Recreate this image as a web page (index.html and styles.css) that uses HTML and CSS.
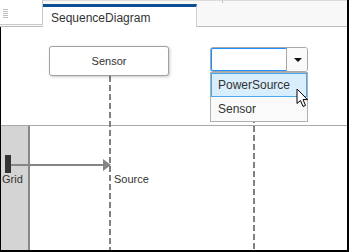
FILE: index.html
```html
<!DOCTYPE html>
<html>
<head>
<meta charset="utf-8">
<link rel="stylesheet" href="styles.css">
</head>
<body>
<div class="app">
  <div class="toolbar">
    <div class="grip"><span></span><span></span><span></span><span></span><span></span></div>
    <div class="tab">SequenceDiagram</div>
    <div class="tick"></div>
  </div>
  <div class="canvas">
    <div class="upper"></div>
    <div class="lower">
      <div class="lane"></div>
    </div>

    <div class="lifeline l1"></div>
    <div class="lifeline l2"></div>

    <div class="node sensor">Sensor</div>

    <div class="combo">
      <div class="combo-input"></div>
      <div class="combo-btn"><span class="caret"></span></div>
    </div>

    <ul class="list">
      <li class="item active">PowerSource</li>
      <li class="item">Sensor</li>
    </ul>

    <div class="actbar"></div>
    <div class="msg"><div class="msg-line"></div><div class="msg-head"></div></div>
    <div class="label grid">Grid</div>
    <div class="label source">Source</div>

    <svg class="cursor" width="13" height="20" viewBox="0 0 13 20">
      <path d="M1 1 L1 15.5 L4.5 12.5 L7 18.5 L9.5 17.4 L7 11.6 L11.5 11.6 Z" fill="#fff" stroke="#000" stroke-width="1" stroke-linejoin="miter"/>
    </svg>
  </div>
</div>
</body>
</html>
```

FILE: styles.css
```css
* { box-sizing: border-box; }
html, body { margin: 0; padding: 0; background: #fff; }
body { font-family: "Liberation Sans", Arial, sans-serif; color: #333; }

.app {
  width: 349px;
  height: 252px;
  display: flex;
  flex-direction: column;
  border-right: 2px solid #000;
}

.toolbar {
  height: 27px;
  flex: none;
  display: flex;
  align-items: flex-start;
  background: #f8f8f8;
  border-top: 1px solid #dcdcdc;
  border-bottom: 1px solid #bdbdbd;
  position: relative;
}

.grip {
  width: 43px;
  height: 25px;
  margin-top: -1px;
  background: #fff;
  border-right: 1px solid #c8c8c8;
  border-bottom: 1px solid #c8c8c8;
  display: flex;
  flex-direction: column;
  gap: 1px;
  padding: 9px 0 0 3px;
}
.grip span {
  display: block;
  width: 5px;
  height: 1px;
  background: #bdbdbd;
}

.tab {
  width: 154px;
  height: 23px;
  margin-top: 3px;
  margin-bottom: -1px;
  background: #fff;
  border-top: 3px solid #0b4f96;
  border-right: 1px solid #d0d0d0;
  padding: 4px 0 0 8px;
  font-size: 12px;
  line-height: 14px;
  color: #333;
  white-space: nowrap;
}

.tick {
  position: absolute;
  left: 222px;
  top: 0;
  width: 1px;
  height: 2px;
  background: #bbb;
}

.canvas {
  flex: 1;
  position: relative;
  display: flex;
  flex-direction: column;
  border-left: 1px solid #000;
  border-bottom: 2px solid #000;
  background: #fff;
  overflow: hidden;
}

.upper { height: 98px; flex: none; }
.lower {
  flex: 1;
  border-top: 1px solid #a8a8a8;
  display: flex;
}
.lane {
  width: 29px;
  background: #d4d4d4;
  border-right: 2px solid #888;
}

.lifeline {
  position: absolute;
  width: 2px;
  bottom: 0;
  background: repeating-linear-gradient(to bottom, #808080 0 6px, transparent 6px 9px);
}
.l1 { left: 108px; top: 49px; }
.l2 { left: 252px; top: 45px; }

.node {
  position: absolute;
  background: #fff;
  border: 1px solid #a0a0a0;
  border-radius: 3px;
  box-shadow: 1px 1px 3px rgba(0,0,0,0.22);
  display: flex;
  align-items: center;
  justify-content: center;
  font-size: 11px;
  color: #333;
}
.sensor { left: 48px; top: 19px; width: 120px; height: 30px; }

.combo {
  position: absolute;
  left: 209px;
  top: 20px;
  width: 98px;
  height: 25px;
  display: flex;
  background: #fff;
  border: 1px solid #a8a8a8;
  border-radius: 3px;
}
.combo-input {
  flex: 1;
  border: 1px solid #1e8fff;
  border-right: none;
  border-radius: 2px 0 0 2px;
  margin: 0 0 0 0;
}
.combo-btn {
  width: 21px;
  border-left: 1px solid #a8a8a8;
  display: flex;
  align-items: center;
  justify-content: center;
  background: #fafafa;
  border-radius: 0 2px 2px 0;
}
.caret {
  width: 0;
  height: 0;
  border-left: 4px solid transparent;
  border-right: 4px solid transparent;
  border-top: 4px solid #111;
  margin-left: 1px;
}

.list {
  position: absolute;
  left: 209px;
  top: 45px;
  width: 98px;
  height: 50px;
  margin: 0;
  padding: 0;
  list-style: none;
  background: #fafafa;
  border: 1px solid #b0b0b0;
}
.item {
  height: 24px;
  padding-left: 6px;
  font-size: 12px;
  line-height: 22px;
  color: #333;
  border: 1px solid transparent;
}
.item.active {
  background: #d9eefd;
  border-color: #49a7ec;
}

.actbar {
  position: absolute;
  left: 4px;
  top: 128px;
  width: 6px;
  height: 18px;
  background: #333;
}
.msg {
  position: absolute;
  left: 10px;
  top: 132px;
  width: 100px;
  height: 12px;
  display: flex;
  align-items: center;
}
.msg-line {
  flex: 1;
  height: 2px;
  background: #858585;
}
.msg-head {
  width: 0;
  height: 0;
  border-top: 6px solid transparent;
  border-bottom: 6px solid transparent;
  border-left: 8px solid #858585;
}

.label {
  position: absolute;
  font-size: 11px;
  line-height: 13px;
  color: #333;
  white-space: nowrap;
}
.grid { left: 1px; top: 146px; }
.source { left: 113px; top: 146px; }

.cursor {
  position: absolute;
  left: 295px;
  top: 61px;
}
```
